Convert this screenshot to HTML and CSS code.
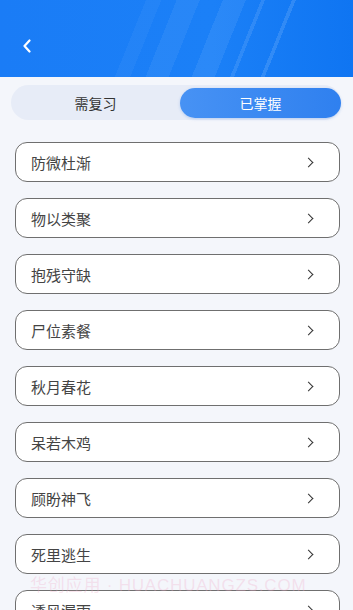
FILE: index.html
```html
<!DOCTYPE html>
<html lang="zh">
<head>
<meta charset="utf-8">
<link rel="stylesheet" href="styles.css">
</head>
<body>
<div class="page">
  <header class="header">
    <svg class="back" width="10" height="14" viewBox="0 0 10 14"><path d="M7.5 1.5 L2.5 7 L7.5 12.5" fill="none" stroke="#fff" stroke-width="2.2" stroke-linecap="round" stroke-linejoin="round"/></svg>
  </header>
  <div class="tabs">
    <div class="tab">需复习</div>
    <div class="tab active">已掌握</div>
  </div>
  <ul class="list">
    <li class="card"><span>防微杜渐</span><i class="chev"></i></li>
    <li class="card"><span>物以类聚</span><i class="chev"></i></li>
    <li class="card"><span>抱残守缺</span><i class="chev"></i></li>
    <li class="card"><span>尸位素餐</span><i class="chev"></i></li>
    <li class="card"><span>秋月春花</span><i class="chev"></i></li>
    <li class="card"><span>呆若木鸡</span><i class="chev"></i></li>
    <li class="card"><span>顾盼神飞</span><i class="chev"></i></li>
    <li class="card"><span>死里逃生</span><i class="chev"></i></li>
    <li class="card"><span>透风漏雨</span><i class="chev"></i></li>
  </ul>
  <div class="watermark">华创应用 · HUACHUANGZS.COM</div>
</div>
</body>
</html>
```
FILE: styles.css
```css
* { box-sizing: border-box; }
html, body { margin: 0; padding: 0; }
body {
  width: 353px;
  height: 610px;
  overflow: hidden;
  background: #f4f6fb;
  font-family: "Noto Sans CJK SC", "Noto Sans", sans-serif;
}
.page { position: relative; height: 610px; overflow: hidden; }
.header {
  height: 77px;
  display: flex;
  align-items: flex-end;
  padding: 0 0 24px 22px;
  background:
    linear-gradient(112deg, transparent 0 76%, rgba(255,255,255,0.12) 76% 77%, transparent 77%),
    linear-gradient(112deg, transparent 0 68%, rgba(255,255,255,0.10) 68% 69%, transparent 69%),
    linear-gradient(112deg, transparent 0 58%, rgba(255,255,255,0.07) 58% 64%, transparent 64%),
    linear-gradient(112deg, transparent 0 46%, rgba(255,255,255,0.06) 46% 52%, transparent 52%),
    linear-gradient(112deg, transparent 0 38%, rgba(255,255,255,0.04) 38% 42%, transparent 42%),
    linear-gradient(90deg, #1a7cf6 0%, #1b80f7 60%, #0f75f2 100%);
}
.back { display: block; }
.tabs {
  margin: 8px 12px 0 11px;
  height: 35px;
  border-radius: 18px;
  background: #e7ecf7;
  display: flex;
  align-items: center;
}
.tab {
  flex: 1;
  height: 30px;
  border-radius: 15px;
  display: flex;
  align-items: center;
  justify-content: center;
  font-size: 14px;
  color: #333;
}
.tab.active {
  flex: 0 0 161px;
  color: #fff;
  background: linear-gradient(90deg, #4792f4, #2f80ef);
  box-shadow: 0 1px 3px rgba(40,110,220,0.25);
}
.list {
  list-style: none;
  margin: 22px 13px 0 15px;
  padding: 0;
  display: flex;
  flex-direction: column;
  gap: 16px;
}
.card {
  height: 40px;
  flex-shrink: 0;
  background: #fff;
  border: 1.5px solid #6f6f6f;
  border-radius: 12px;
  display: flex;
  align-items: center;
  justify-content: space-between;
  padding: 0 27px 0 15px;
  font-size: 15px;
  color: #444;
}
.chev {
  width: 7px;
  height: 7px;
  border-top: 1.8px solid #333;
  border-right: 1.8px solid #333;
  transform: rotate(45deg);
}
.watermark {
  position: absolute;
  left: 30px;
  top: 576px;
  font-size: 17px;
  line-height: 20px;
  letter-spacing: 0.8px;
  color: rgba(240, 170, 200, 0.3);
  white-space: nowrap;
  font-family: "Liberation Sans", "Noto Sans CJK SC", sans-serif;
}
```
